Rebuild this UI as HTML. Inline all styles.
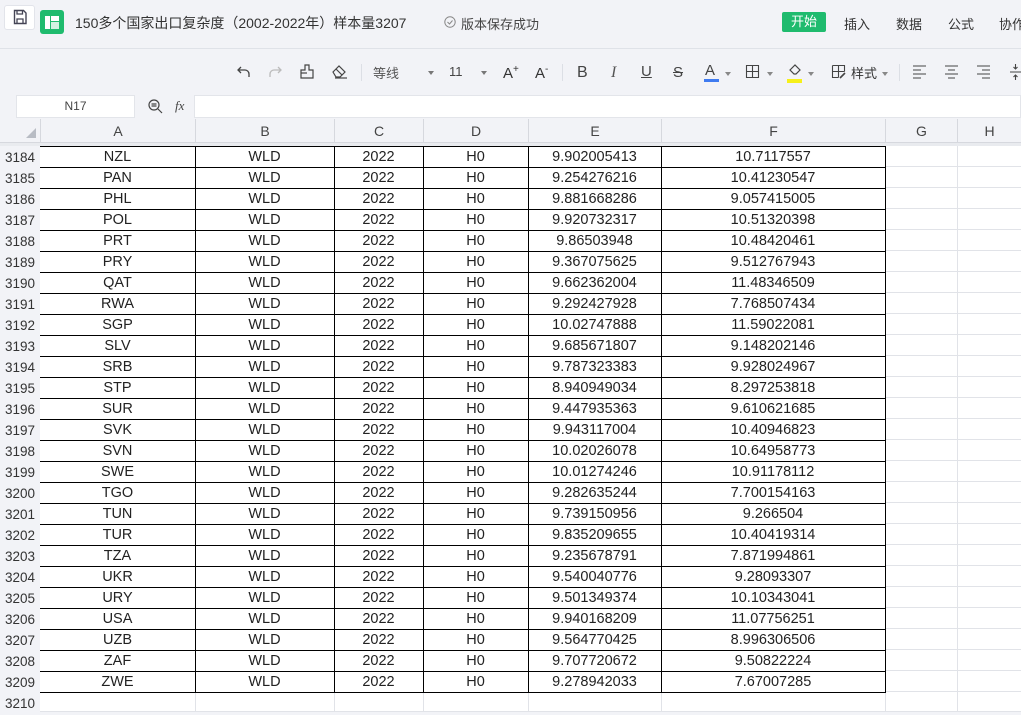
<!DOCTYPE html>
<html><head><meta charset="utf-8"><style>
*{margin:0;padding:0;box-sizing:border-box}
body{width:1021px;height:712px;overflow:hidden;background:#f2f3f7;font-family:"Liberation Sans","Noto Sans CJK SC",sans-serif;position:relative;color:#333}
.a{position:absolute;white-space:nowrap}
.tb{font-size:13px;color:#555}
svg{position:absolute;overflow:visible}
.grid{position:absolute;left:0;top:146px;width:1021px}
.r{position:absolute;left:0;height:21px;width:1021px;font-size:14.5px;color:#222}
.r span{position:absolute;top:1px;height:21px;line-height:21px;text-align:center}
.r span.rn{top:0;height:21px;line-height:23px}
.rn{left:0;width:40px;text-align:left!important;padding-left:5px;color:#333;font-size:13.5px;background:#f2f3f7}
#tool{position:absolute;left:0;top:1px;width:1021px;height:95px}
</style></head><body>
<!-- top bar -->
<div class="a" style="left:4px;top:5px;width:31px;height:25px;background:#fff;border:1px solid #e2e4ea;border-radius:3px"></div>
<svg style="left:13px;top:9px" width="14" height="16"><path d="M1.5 1.5h9l2.5 2.5v10.5h-11.5z" fill="none" stroke="#445" stroke-width="1.4"/><path d="M4 1.5v3.5h5.5v-3.5M4 14.5v-4.5h6v4.5" fill="none" stroke="#445" stroke-width="1.3"/></svg>
<div class="a" style="left:40px;top:10px;width:24px;height:24px;background:#1fbb6e;border-radius:3px"></div>
<div class="a" style="left:45px;top:16px;width:5px;height:13px;background:#fff"></div>
<div class="a" style="left:51px;top:16px;width:8px;height:5px;background:#fff"></div>
<div class="a" style="left:51px;top:22px;width:8px;height:7px;background:#fff;opacity:.8"></div>
<div class="a" style="left:75px;top:13px;font-size:14px;color:#333">150多个国家出口复杂度（2002-2022年）样本量3207</div>
<svg style="left:444px;top:16px" width="12" height="12"><circle cx="6" cy="6" r="5.2" fill="none" stroke="#888" stroke-width="1"/><path d="M3.5 6l2 2 3-3.5" fill="none" stroke="#888"/></svg>
<div class="a" style="left:461px;top:14px;font-size:13px;color:#444">版本保存成功</div>
<div class="a" style="left:782px;top:12px;width:44px;height:20px;background:#1fbb6e;border-radius:2px;color:#fff;font-size:13px;line-height:20px;text-align:center">开始</div>
<div class="a tb" style="left:844px;top:14px;color:#333">插入</div>
<div class="a tb" style="left:896px;top:14px;color:#333">数据</div>
<div class="a tb" style="left:948px;top:14px;color:#333">公式</div>
<div class="a tb" style="left:999px;top:14px;color:#333">协作</div>
<div class="a" style="left:0;top:48px;width:1021px;height:1px;background:#dfe2e8"></div>
<!-- toolbar -->
<div id="tool">
<svg style="left:237px;top:65px" width="14" height="12"><path d="M4 1L1 4l3 3M1 4h7a4 4 0 0 1 4 4v3" fill="none" stroke="#444" stroke-width="1.3"/></svg>
<svg style="left:268px;top:65px" width="14" height="12"><path d="M10 1l3 3-3 3M13 4H6a4 4 0 0 0-4 4v3" fill="none" stroke="#bbb" stroke-width="1.3"/></svg>
<svg style="left:300px;top:63px" width="14" height="15"><path d="M1 14h12V6H9V1H5v5H1z" fill="none" stroke="#444" stroke-width="1.2"/><path d="M1 9h6" stroke="#444" stroke-width="1.2"/></svg>
<svg style="left:332px;top:63px" width="16" height="15"><path d="M1 8l6-6 6 6-5 5H4z M4 5l6 6" fill="none" stroke="#444" stroke-width="1.2"/><path d="M3 14h12" stroke="#444" stroke-width="1.2"/></svg>
<div class="a" style="left:361px;top:63px;width:1px;height:17px;background:#dcdfe5"></div>
<div class="a tb" style="left:373px;top:62px">等线</div>
<div class="a" style="left:428px;top:70px;border:3px solid transparent;border-top:4px solid #777"></div>
<div class="a tb" style="left:449px;top:63px;color:#444">11</div>
<div class="a" style="left:481px;top:70px;border:3px solid transparent;border-top:4px solid #777"></div>
<div class="a" style="left:503px;top:63px;font-size:15px;color:#333">A<sup style="font-size:10px">+</sup></div>
<div class="a" style="left:535px;top:63px;font-size:15px;color:#333">A<sup style="font-size:10px">-</sup></div>
<div class="a" style="left:562px;top:63px;width:1px;height:17px;background:#dcdfe5"></div>
<div class="a" style="left:577px;top:63px;font-size:16px;color:#444">B</div>
<div class="a" style="left:611px;top:63px;font-size:16px;color:#555;font-style:italic;font-family:'Liberation Serif',serif">I</div>
<div class="a" style="left:641px;top:62px;font-size:15px;color:#444;text-decoration:underline">U</div>
<div class="a" style="left:673px;top:63px;font-size:15px;color:#444;text-decoration:line-through">S</div>
<div class="a" style="left:705px;top:61px;font-size:15px;color:#444">A</div>
<div class="a" style="left:704px;top:78px;width:15px;height:3px;background:#3f7bf0"></div>
<div class="a" style="left:725px;top:71px;border:3px solid transparent;border-top:4px solid #888"></div>
<svg style="left:746px;top:64px" width="14" height="14"><path d="M.5.5h12v12H.5zM6.5.5v12M.5 6.5h12" fill="none" stroke="#444" stroke-width="1.1"/></svg>
<div class="a" style="left:767px;top:71px;border:3px solid transparent;border-top:4px solid #888"></div>
<svg style="left:788px;top:63px" width="14" height="13"><path d="M2 6l5-5 5 5-4 4H6z" fill="none" stroke="#444" stroke-width="1.2"/></svg>
<div class="a" style="left:787px;top:78px;width:15px;height:4px;background:#f6f01a"></div>
<div class="a" style="left:808px;top:71px;border:3px solid transparent;border-top:4px solid #888"></div>
<svg style="left:832px;top:64px" width="14" height="14"><path d="M.5.5h12v6M.5.5v12h6M6.5.5v12M.5 6.5h12" fill="none" stroke="#444" stroke-width="1.1"/><path d="M8 13l5-5" stroke="#444" stroke-width="1.6"/></svg>
<div class="a tb" style="left:851px;top:62px;color:#333">样式</div>
<div class="a" style="left:882px;top:71px;border:3px solid transparent;border-top:4px solid #888"></div>
<div class="a" style="left:899px;top:63px;width:1px;height:17px;background:#dcdfe5"></div>
<svg style="left:913px;top:64px" width="14" height="14"><path d="M0 1h13M0 5h8M0 9h13M0 13h8" stroke="#444" stroke-width="1.1"/></svg>
<svg style="left:945px;top:64px" width="14" height="14"><path d="M0 1h13M3 5h7M0 9h13M3 13h7" stroke="#444" stroke-width="1.1"/></svg>
<svg style="left:977px;top:64px" width="14" height="14"><path d="M0 1h13M5 5h8M0 9h13M5 13h8" stroke="#444" stroke-width="1.1"/></svg>
<svg style="left:1010px;top:63px" width="12" height="16"><path d="M0 8h11M5.5 0v5M3.5 3l2 2 2-2M5.5 16v-5M3.5 13l2-2 2 2" fill="none" stroke="#444" stroke-width="1.1"/></svg>
</div>
<!-- formula bar -->
<div class="a" style="left:16px;top:95px;width:119px;height:23px;background:#fff;border:1px solid #e3e5ea;font-size:12px;line-height:21px;text-align:center;color:#444">N17</div>
<svg style="left:148px;top:99px" width="16" height="16"><circle cx="6" cy="6" r="5" fill="none" stroke="#444" stroke-width="1.2"/><path d="M10 10l4 4M3.5 5h5M3.5 7h5" stroke="#444" stroke-width="1.2"/></svg>
<div class="a" style="left:175px;top:98px;font-size:13px;font-style:italic;font-family:'Liberation Serif',serif;color:#444">fx</div>
<div class="a" style="left:194px;top:95px;width:827px;height:23px;background:#fff;border:1px solid #e3e5ea"></div>
<!-- column headers -->
<div class="a" style="left:0;top:119px;width:1021px;height:24px;background:#f2f3f7;border-bottom:1px solid #d6d8de"></div>
<div class="a" style="left:26px;top:128px;border-left:10px solid transparent;border-bottom:10px solid #b8bcc4"></div>
<div class="a" style="left:0;top:143px;width:1021px;height:3px;background:#e9ebef"></div>
<div class="a" style="left:40px;top:146px;width:981px;height:566px;background:#fff"></div>
<div class="a" style="top:119px;left:0;width:1021px;height:24px;font-size:14px;color:#444">
<span class="a" style="left:40px;width:155px;text-align:center;line-height:24px;border-left:1px solid #d6d8de">A</span>
<span class="a" style="left:195px;width:139px;text-align:center;line-height:24px;border-left:1px solid #d6d8de">B</span>
<span class="a" style="left:334px;width:89px;text-align:center;line-height:24px;border-left:1px solid #d6d8de">C</span>
<span class="a" style="left:423px;width:105px;text-align:center;line-height:24px;border-left:1px solid #d6d8de">D</span>
<span class="a" style="left:528px;width:133px;text-align:center;line-height:24px;border-left:1px solid #d6d8de">E</span>
<span class="a" style="left:661px;width:224px;text-align:center;line-height:24px;border-left:1px solid #d6d8de">F</span>
<span class="a" style="left:885px;width:72px;text-align:center;line-height:24px;border-left:1px solid #d6d8de">G</span>
<span class="a" style="left:957px;width:64px;text-align:center;line-height:24px;border-left:1px solid #d6d8de">H</span>
</div>
<!-- light gridlines -->
<div class="a" style="left:885px;top:146px;width:1px;height:566px;background:#e1e3e8"></div>
<div class="a" style="left:957px;top:146px;width:1px;height:566px;background:#e1e3e8"></div>
<div class="a" style="left:885px;top:146px;width:136px;height:546px;background:repeating-linear-gradient(to bottom,transparent 0,transparent 20px,#e1e3e8 20px,#e1e3e8 21px)"></div>
<div class="a" style="left:195px;top:692px;width:1px;height:20px;background:#e1e3e8"></div>
<div class="a" style="left:334px;top:692px;width:1px;height:20px;background:#e1e3e8"></div>
<div class="a" style="left:423px;top:692px;width:1px;height:20px;background:#e1e3e8"></div>
<div class="a" style="left:528px;top:692px;width:1px;height:20px;background:#e1e3e8"></div>
<div class="a" style="left:661px;top:692px;width:1px;height:20px;background:#e1e3e8"></div>
<div class="a" style="left:40px;top:711px;width:981px;height:1px;background:#e1e3e8"></div>
<!-- black table borders -->
<div class="a" style="left:40px;top:146px;width:846px;height:547px;border:1px solid #000;border-left:none;background:repeating-linear-gradient(to bottom,transparent 0,transparent 20px,#000 20px,#000 21px)"></div>
<div class="a" style="left:195px;top:146px;width:1px;height:547px;background:#000"></div>
<div class="a" style="left:334px;top:146px;width:1px;height:547px;background:#000"></div>
<div class="a" style="left:423px;top:146px;width:1px;height:547px;background:#000"></div>
<div class="a" style="left:528px;top:146px;width:1px;height:547px;background:#000"></div>
<div class="a" style="left:661px;top:146px;width:1px;height:547px;background:#000"></div>
<div class="a" style="left:0;top:146px;width:40px;height:566px;background:#f2f3f7;border-right:1px solid #d6d8de"></div>
<div class="grid">
<div class="r" style="top:0"><span class="rn">3184</span><span style="left:40px;width:155px">NZL</span><span style="left:195px;width:139px">WLD</span><span style="left:334px;width:89px">2022</span><span style="left:423px;width:105px">H0</span><span style="left:528px;width:133px">9.902005413</span><span style="left:661px;width:224px">10.7117557</span></div>
<div class="r" style="top:21px"><span class="rn">3185</span><span style="left:40px;width:155px">PAN</span><span style="left:195px;width:139px">WLD</span><span style="left:334px;width:89px">2022</span><span style="left:423px;width:105px">H0</span><span style="left:528px;width:133px">9.254276216</span><span style="left:661px;width:224px">10.41230547</span></div>
<div class="r" style="top:42px"><span class="rn">3186</span><span style="left:40px;width:155px">PHL</span><span style="left:195px;width:139px">WLD</span><span style="left:334px;width:89px">2022</span><span style="left:423px;width:105px">H0</span><span style="left:528px;width:133px">9.881668286</span><span style="left:661px;width:224px">9.057415005</span></div>
<div class="r" style="top:63px"><span class="rn">3187</span><span style="left:40px;width:155px">POL</span><span style="left:195px;width:139px">WLD</span><span style="left:334px;width:89px">2022</span><span style="left:423px;width:105px">H0</span><span style="left:528px;width:133px">9.920732317</span><span style="left:661px;width:224px">10.51320398</span></div>
<div class="r" style="top:84px"><span class="rn">3188</span><span style="left:40px;width:155px">PRT</span><span style="left:195px;width:139px">WLD</span><span style="left:334px;width:89px">2022</span><span style="left:423px;width:105px">H0</span><span style="left:528px;width:133px">9.86503948</span><span style="left:661px;width:224px">10.48420461</span></div>
<div class="r" style="top:105px"><span class="rn">3189</span><span style="left:40px;width:155px">PRY</span><span style="left:195px;width:139px">WLD</span><span style="left:334px;width:89px">2022</span><span style="left:423px;width:105px">H0</span><span style="left:528px;width:133px">9.367075625</span><span style="left:661px;width:224px">9.512767943</span></div>
<div class="r" style="top:126px"><span class="rn">3190</span><span style="left:40px;width:155px">QAT</span><span style="left:195px;width:139px">WLD</span><span style="left:334px;width:89px">2022</span><span style="left:423px;width:105px">H0</span><span style="left:528px;width:133px">9.662362004</span><span style="left:661px;width:224px">11.48346509</span></div>
<div class="r" style="top:147px"><span class="rn">3191</span><span style="left:40px;width:155px">RWA</span><span style="left:195px;width:139px">WLD</span><span style="left:334px;width:89px">2022</span><span style="left:423px;width:105px">H0</span><span style="left:528px;width:133px">9.292427928</span><span style="left:661px;width:224px">7.768507434</span></div>
<div class="r" style="top:168px"><span class="rn">3192</span><span style="left:40px;width:155px">SGP</span><span style="left:195px;width:139px">WLD</span><span style="left:334px;width:89px">2022</span><span style="left:423px;width:105px">H0</span><span style="left:528px;width:133px">10.02747888</span><span style="left:661px;width:224px">11.59022081</span></div>
<div class="r" style="top:189px"><span class="rn">3193</span><span style="left:40px;width:155px">SLV</span><span style="left:195px;width:139px">WLD</span><span style="left:334px;width:89px">2022</span><span style="left:423px;width:105px">H0</span><span style="left:528px;width:133px">9.685671807</span><span style="left:661px;width:224px">9.148202146</span></div>
<div class="r" style="top:210px"><span class="rn">3194</span><span style="left:40px;width:155px">SRB</span><span style="left:195px;width:139px">WLD</span><span style="left:334px;width:89px">2022</span><span style="left:423px;width:105px">H0</span><span style="left:528px;width:133px">9.787323383</span><span style="left:661px;width:224px">9.928024967</span></div>
<div class="r" style="top:231px"><span class="rn">3195</span><span style="left:40px;width:155px">STP</span><span style="left:195px;width:139px">WLD</span><span style="left:334px;width:89px">2022</span><span style="left:423px;width:105px">H0</span><span style="left:528px;width:133px">8.940949034</span><span style="left:661px;width:224px">8.297253818</span></div>
<div class="r" style="top:252px"><span class="rn">3196</span><span style="left:40px;width:155px">SUR</span><span style="left:195px;width:139px">WLD</span><span style="left:334px;width:89px">2022</span><span style="left:423px;width:105px">H0</span><span style="left:528px;width:133px">9.447935363</span><span style="left:661px;width:224px">9.610621685</span></div>
<div class="r" style="top:273px"><span class="rn">3197</span><span style="left:40px;width:155px">SVK</span><span style="left:195px;width:139px">WLD</span><span style="left:334px;width:89px">2022</span><span style="left:423px;width:105px">H0</span><span style="left:528px;width:133px">9.943117004</span><span style="left:661px;width:224px">10.40946823</span></div>
<div class="r" style="top:294px"><span class="rn">3198</span><span style="left:40px;width:155px">SVN</span><span style="left:195px;width:139px">WLD</span><span style="left:334px;width:89px">2022</span><span style="left:423px;width:105px">H0</span><span style="left:528px;width:133px">10.02026078</span><span style="left:661px;width:224px">10.64958773</span></div>
<div class="r" style="top:315px"><span class="rn">3199</span><span style="left:40px;width:155px">SWE</span><span style="left:195px;width:139px">WLD</span><span style="left:334px;width:89px">2022</span><span style="left:423px;width:105px">H0</span><span style="left:528px;width:133px">10.01274246</span><span style="left:661px;width:224px">10.91178112</span></div>
<div class="r" style="top:336px"><span class="rn">3200</span><span style="left:40px;width:155px">TGO</span><span style="left:195px;width:139px">WLD</span><span style="left:334px;width:89px">2022</span><span style="left:423px;width:105px">H0</span><span style="left:528px;width:133px">9.282635244</span><span style="left:661px;width:224px">7.700154163</span></div>
<div class="r" style="top:357px"><span class="rn">3201</span><span style="left:40px;width:155px">TUN</span><span style="left:195px;width:139px">WLD</span><span style="left:334px;width:89px">2022</span><span style="left:423px;width:105px">H0</span><span style="left:528px;width:133px">9.739150956</span><span style="left:661px;width:224px">9.266504</span></div>
<div class="r" style="top:378px"><span class="rn">3202</span><span style="left:40px;width:155px">TUR</span><span style="left:195px;width:139px">WLD</span><span style="left:334px;width:89px">2022</span><span style="left:423px;width:105px">H0</span><span style="left:528px;width:133px">9.835209655</span><span style="left:661px;width:224px">10.40419314</span></div>
<div class="r" style="top:399px"><span class="rn">3203</span><span style="left:40px;width:155px">TZA</span><span style="left:195px;width:139px">WLD</span><span style="left:334px;width:89px">2022</span><span style="left:423px;width:105px">H0</span><span style="left:528px;width:133px">9.235678791</span><span style="left:661px;width:224px">7.871994861</span></div>
<div class="r" style="top:420px"><span class="rn">3204</span><span style="left:40px;width:155px">UKR</span><span style="left:195px;width:139px">WLD</span><span style="left:334px;width:89px">2022</span><span style="left:423px;width:105px">H0</span><span style="left:528px;width:133px">9.540040776</span><span style="left:661px;width:224px">9.28093307</span></div>
<div class="r" style="top:441px"><span class="rn">3205</span><span style="left:40px;width:155px">URY</span><span style="left:195px;width:139px">WLD</span><span style="left:334px;width:89px">2022</span><span style="left:423px;width:105px">H0</span><span style="left:528px;width:133px">9.501349374</span><span style="left:661px;width:224px">10.10343041</span></div>
<div class="r" style="top:462px"><span class="rn">3206</span><span style="left:40px;width:155px">USA</span><span style="left:195px;width:139px">WLD</span><span style="left:334px;width:89px">2022</span><span style="left:423px;width:105px">H0</span><span style="left:528px;width:133px">9.940168209</span><span style="left:661px;width:224px">11.07756251</span></div>
<div class="r" style="top:483px"><span class="rn">3207</span><span style="left:40px;width:155px">UZB</span><span style="left:195px;width:139px">WLD</span><span style="left:334px;width:89px">2022</span><span style="left:423px;width:105px">H0</span><span style="left:528px;width:133px">9.564770425</span><span style="left:661px;width:224px">8.996306506</span></div>
<div class="r" style="top:504px"><span class="rn">3208</span><span style="left:40px;width:155px">ZAF</span><span style="left:195px;width:139px">WLD</span><span style="left:334px;width:89px">2022</span><span style="left:423px;width:105px">H0</span><span style="left:528px;width:133px">9.707720672</span><span style="left:661px;width:224px">9.50822224</span></div>
<div class="r" style="top:525px"><span class="rn">3209</span><span style="left:40px;width:155px">ZWE</span><span style="left:195px;width:139px">WLD</span><span style="left:334px;width:89px">2022</span><span style="left:423px;width:105px">H0</span><span style="left:528px;width:133px">9.278942033</span><span style="left:661px;width:224px">7.67007285</span></div>
<div class="r" style="top:546px"><span class="rn">3210</span></div>
</div>
</body></html>
